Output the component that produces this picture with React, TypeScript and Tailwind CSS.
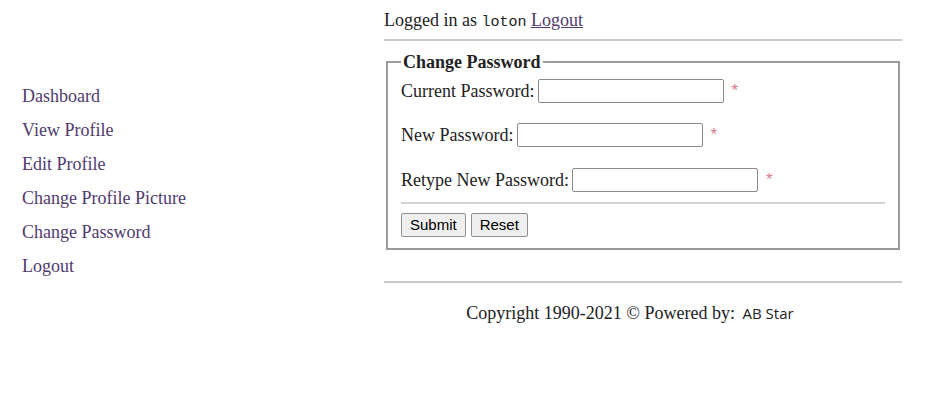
const links = [
  'Dashboard',
  'View Profile',
  'Edit Profile',
  'Change Profile Picture',
  'Change Password',
  'Logout',
];

const fields = [
  { label: 'Current Password:', mt: 'mt-0' },
  { label: 'New Password:', mt: 'mt-[20px]' },
  { label: 'Retype New Password:', mt: 'mt-[21px]' },
];

export default function App() {
  return (
    <div className="w-[941px] h-[415px] bg-white text-[#222] font-['Liberation_Serif',serif] text-[18px]">
      <div className="flex">
        {/* side menu */}
        <nav className="w-[384px] shrink-0 pl-[22px] pt-[86px] flex flex-col gap-[14px]">
          {links.map(l => (
            <a key={l} href="#" className="text-[#4f3a6e] leading-[20px] no-underline">
              {l}
            </a>
          ))}
        </nav>

        <main className="w-[518px] pt-[10px]">
          <div className="leading-[20px]">
            Logged in as <span className="font-['Liberation_Mono',monospace] text-[15px]">loton</span>{' '}
            <a href="#" className="text-[#4f3a6e] underline">Logout</a>
          </div>
          <div className="mt-[6px] h-[2px] bg-[#c8c8c8]" />

          <fieldset className="mt-[11px] mx-[2px] border-2 border-[#9a9a9a] px-[13px] pt-[7px] pb-[11px]">
            <legend className="font-bold px-[2px] leading-[20px]">Change Password</legend>
            {fields.map(f => (
              <div key={f.label} className={`flex items-center h-[24px] ${f.mt}`}>
                <span className="leading-[20px]">{f.label}</span>
                <input
                  type="password"
                  className="ml-[3px] w-[186px] h-[24px] border border-[#8a8a8a] rounded-[2px] bg-white"
                />
                <span className="ml-[8px] text-[#d87a8a] text-[17px] font-['Liberation_Sans',sans-serif]">*</span>
              </div>
            ))}
            <div className="mt-[10px] h-[2px] bg-[#d4d4d4]" />
            <div className="mt-[9px] flex gap-[5px] font-['Liberation_Sans',sans-serif] text-[15px]">
              <button className="h-[24px] px-[8px] bg-[#efefef] border border-[#8f8f8f] rounded-[2px] text-black">
                Submit
              </button>
              <button className="h-[24px] px-[8px] bg-[#efefef] border border-[#8f8f8f] rounded-[2px] text-black">
                Reset
              </button>
            </div>
          </fieldset>

          <div className="mt-[31px] h-[2px] bg-[#c8c8c8]" />
          <div className="mt-[20px] pr-[26px] text-center leading-[20px]">
            Copyright 1990-2021 © Powered by:{' '}
            <span className="ml-[3px] font-['Open_Sans',sans-serif] text-[15px]">AB Star</span>
          </div>
        </main>
      </div>
    </div>
  );
}
